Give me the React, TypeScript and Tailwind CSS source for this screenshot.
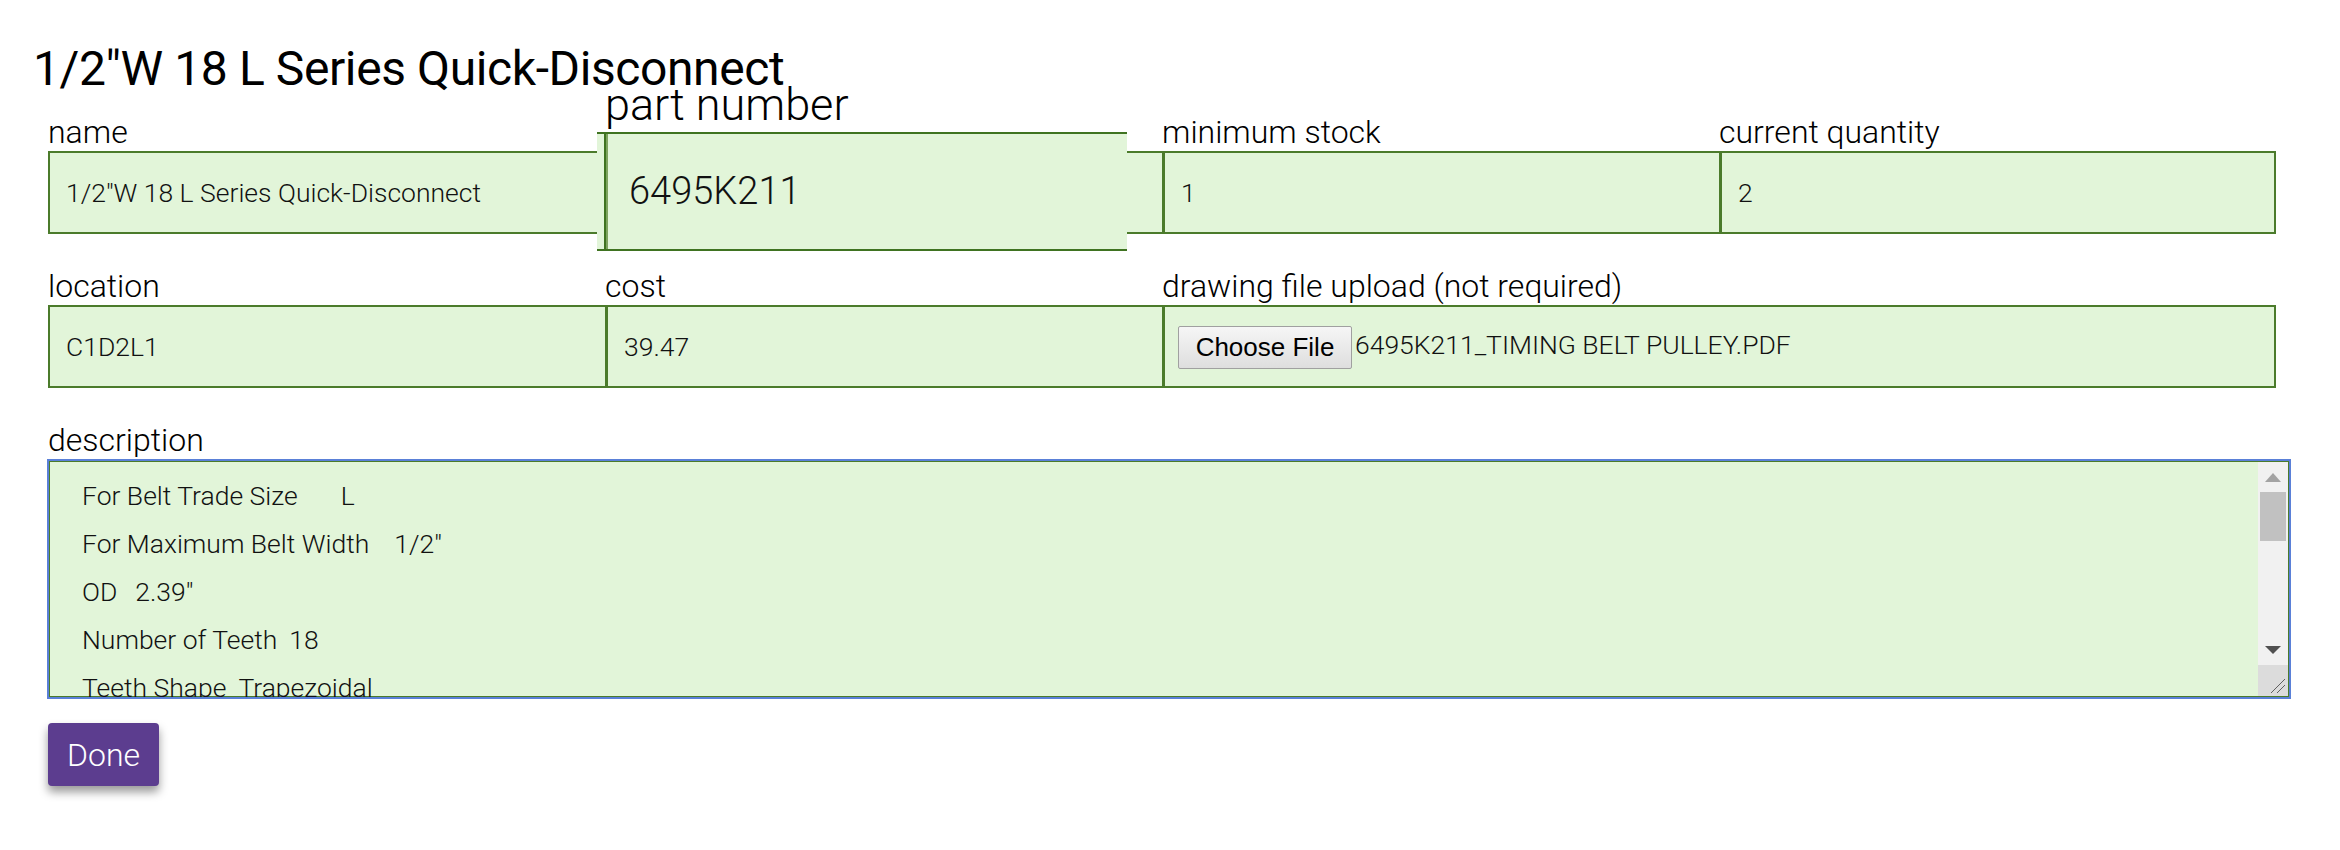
import React from "react";

function Label({ children, invisible }: { children?: React.ReactNode; invisible?: boolean }) {
  return (
    <div
      className={
        "text-[32px] leading-[38px] font-light text-black whitespace-nowrap " + (invisible ? "invisible" : "")
      }
    >
      {children ?? "\u00a0"}
    </div>
  );
}

function Box({ children, edge }: { children?: React.ReactNode; edge: "first" | "mid" | "last" }) {
  const b =
    edge === "first"
      ? "border-l-2"
      : edge === "last"
      ? "border-l-[3px] border-r-2"
      : "border-l-[3px]";
  return (
    <div
      className={
        "h-[83px] bg-[#e2f5d9] border-y-2 border-[#4b7b2b] flex items-center pl-4 text-[26.5px] font-light text-[#111] whitespace-nowrap " +
        b
      }
    >
      {children}
    </div>
  );
}

const lines: [string, string, string][] = [
  ["For Belt Trade Size", "L", "ml-[43px]"],
  ["For Maximum Belt Width", "1/2\"", "ml-[25px]"],
  ["OD", "2.39\"", "ml-[18px]"],
  ["Number of Teeth", "18", "ml-[12px]"],
  ["Teeth Shape", "Trapezoidal", "ml-[12px]"],
  ["Pitch", "3/8\"", "ml-[12px]"],
];

export default function App() {
  return (
    <div className="w-[2340px] min-h-[850px] bg-white font-['Roboto',sans-serif] text-black">
      <div className="pt-[41px] pl-[33px]">
        <h1 className="text-[48px] leading-[56px] font-normal tracking-[-0.4px]">
          1/2"W 18 L Series Quick-Disconnect
        </h1>
      </div>

      <div className="pl-[48px] mt-[16px]">
        {/* Row 1 */}
        <div className="grid grid-cols-4 w-[2228px]">
          <div>
            <Label>name</Label>
            <Box edge="first">1/2"W 18 L Series Quick-Disconnect</Box>
          </div>
          <div className="relative">
            <Label invisible>part number</Label>
            <Box edge="mid"></Box>
            <div className="absolute left-0 top-[-34px] z-10 text-[45px] leading-[52px] font-light text-black whitespace-nowrap">
              part number
            </div>
            <div className="absolute left-[-8px] top-[19px] z-10 w-[530px] h-[119px] bg-[#e2f5d9] border-y-2 border-[#3f7321] flex items-center pl-[32px]">
              <div className="absolute left-[7px] top-0 bottom-0 w-[2px] bg-[#3f7321]" />
              <div className="absolute left-[9px] top-0 bottom-0 w-[2px] bg-[#7da35f]" />
              <span className="text-[38px] font-light text-[#111]">6495K211</span>
            </div>
          </div>
          <div>
            <Label>minimum stock</Label>
            <Box edge="mid">1</Box>
          </div>
          <div>
            <Label>current quantity</Label>
            <Box edge="last">2</Box>
          </div>
        </div>

        {/* Row 2 */}
        <div className="grid grid-cols-4 w-[2228px] mt-[33px]">
          <div>
            <Label>location</Label>
            <Box edge="first">C1D2L1</Box>
          </div>
          <div>
            <Label>cost</Label>
            <Box edge="mid">39.47</Box>
          </div>
          <div className="col-span-2">
            <Label>drawing file upload (not required)</Label>
            <div className="h-[83px] bg-[#e2f5d9] border-y-2 border-l-[3px] border-r-2 border-[#4b7b2b] flex items-center pl-[13px] whitespace-nowrap">
              <div className="h-[43px] w-[174px] mt-[2px] rounded-[2px] border border-[#a0a0a0] bg-gradient-to-b from-[#f6f6f6] to-[#dedede] flex items-center justify-center font-['Liberation_Sans',Arial,sans-serif] text-[26px] text-black">
                Choose File
              </div>
              <span className="ml-[3px] mb-[4px] text-[26.5px] font-light text-[#111]">
                6495K211_TIMING BELT PULLEY.PDF
              </span>
            </div>
          </div>
        </div>

        {/* Description */}
        <div className="mt-[33px] w-[2243px]">
          <Label>description</Label>
          <div className="relative h-[240px] -ml-[1px] border-2 border-[#5a80d8] bg-[#e2f5d9] shadow-[inset_0_0_0_1px_#4b7b2b] overflow-hidden">
            <div className="pt-[11px] pl-[33px] text-[26.5px] leading-[48px] font-light text-[#111]">
              {lines.map(([a, b, m]) => (
                <div key={a} className="whitespace-nowrap">
                  <span>{a}</span>
                  <span className={m}>{b}</span>
                </div>
              ))}
            </div>
            {/* fake scrollbar */}
            <div className="absolute right-[1px] top-[1px] bottom-[1px] w-[30px] bg-[#f1f1f1] flex flex-col">
              <div className="h-[30px] flex items-center justify-center">
                <svg width="16" height="9" viewBox="0 0 16 9">
                  <polygon points="8,0 16,9 0,9" fill="#a3a3a3" />
                </svg>
              </div>
              <div className="mx-[2px] h-[49px] bg-[#c1c1c1]" />
              <div className="flex-1" />
              <div className="h-[30px] flex items-center justify-center -mt-[2px]">
                <svg width="16" height="8" viewBox="0 0 16 8">
                  <polygon points="0,0 16,0 8,8" fill="#505050" />
                </svg>
              </div>
              <div className="h-[31px] bg-[#dcdcdc] relative">
                <svg className="absolute right-[2px] bottom-[2px]" width="16" height="16" viewBox="0 0 16 16">
                  <line x1="15" y1="1" x2="1" y2="15" stroke="#606060" strokeWidth="1" />
                  <line x1="15" y1="7" x2="7" y2="15" stroke="#606060" strokeWidth="1" />
                </svg>
              </div>
            </div>
          </div>
        </div>

        {/* Done */}
        <button className="mt-[24px] w-[111px] h-[63px] rounded-[4px] bg-[#5c3d8f] text-white text-[32px] font-light shadow-[0_6px_10px_rgba(0,0,0,0.4)] flex items-center justify-center">
          Done
        </button>
      </div>
    </div>
  );
}
